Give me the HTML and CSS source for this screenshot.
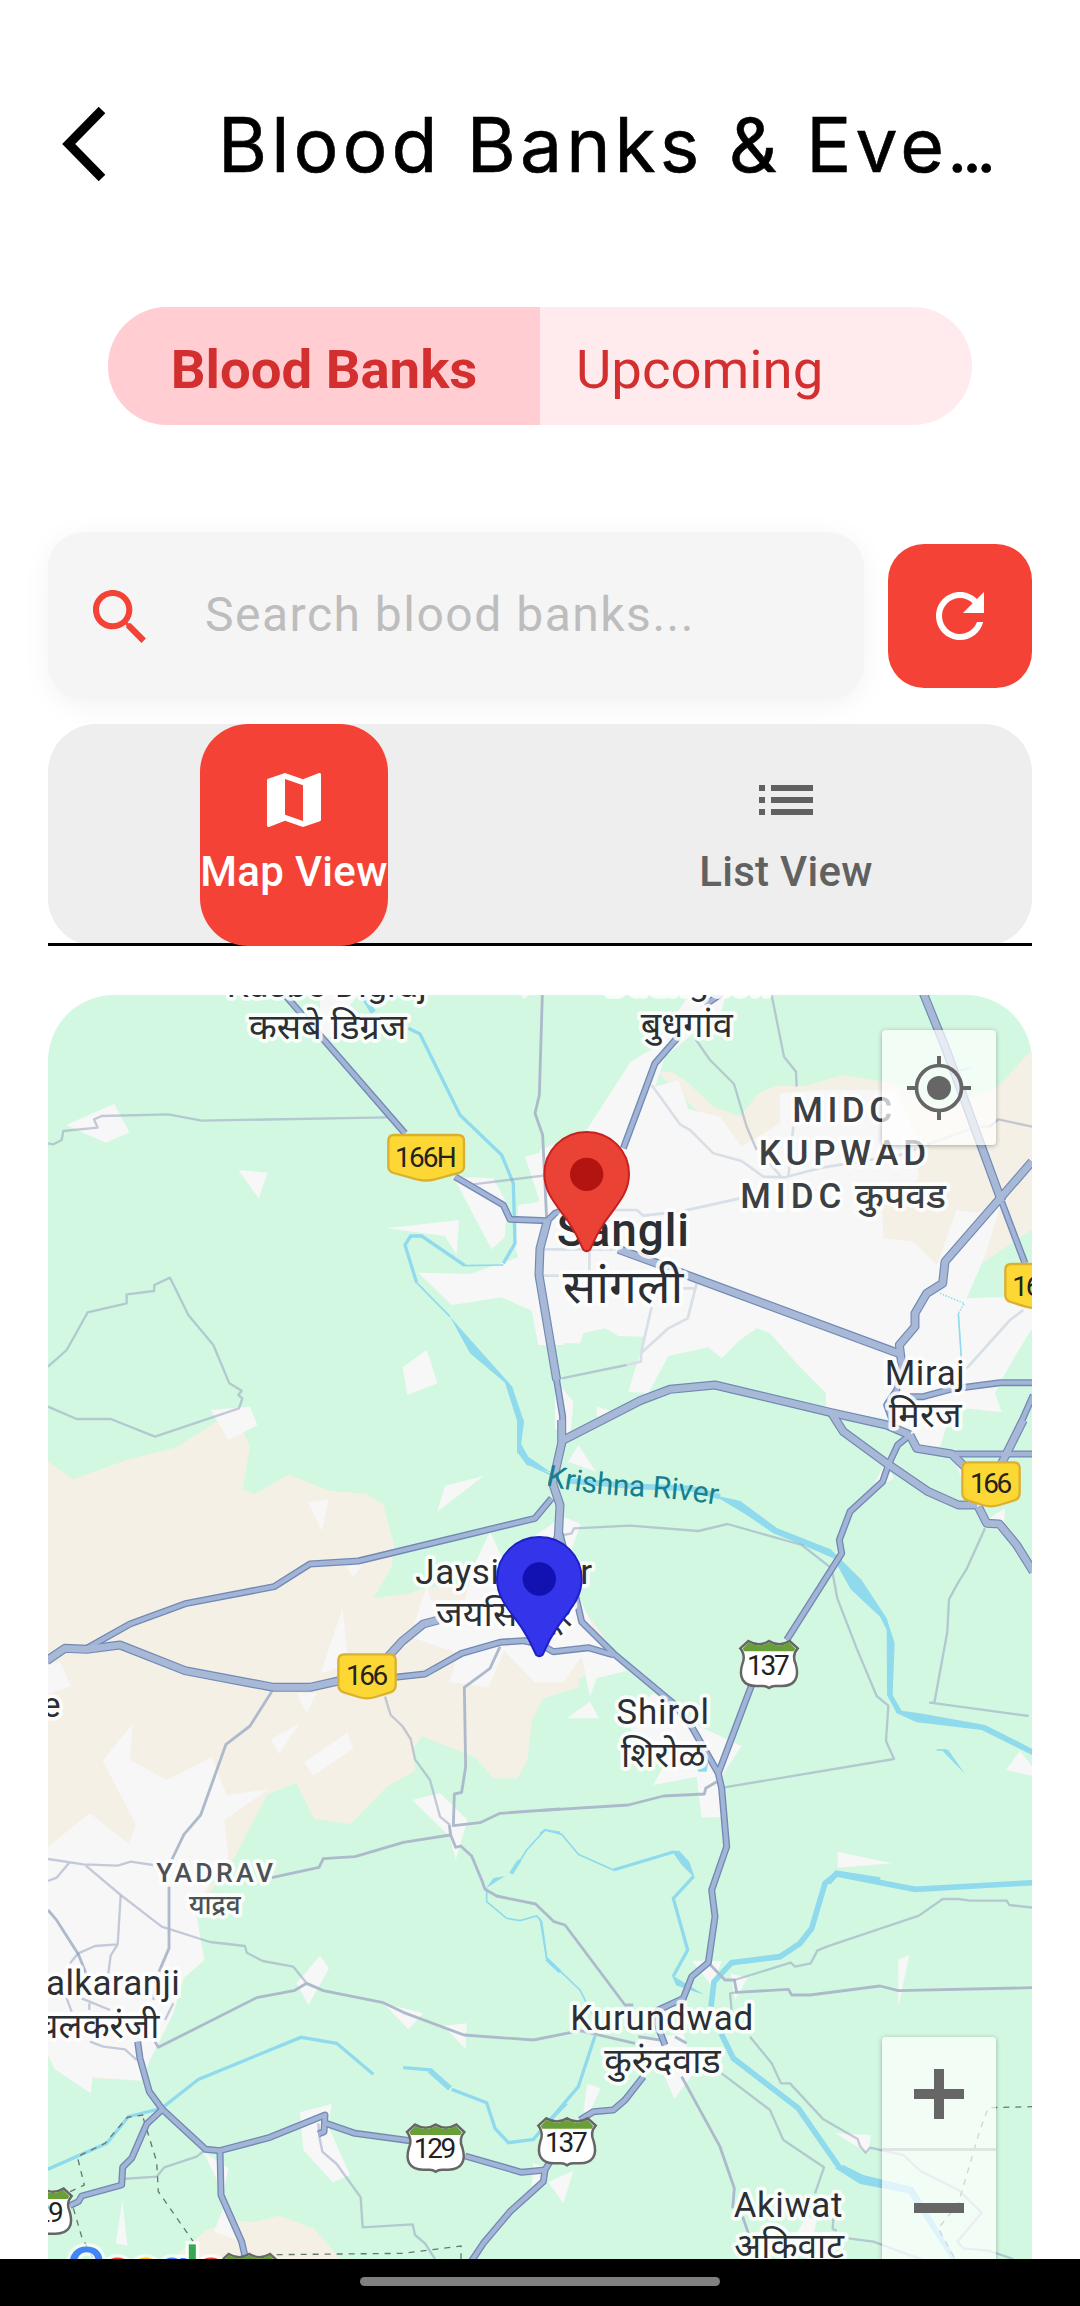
FILE: index.html
```html
<!DOCTYPE html>
<html lang="en">
<head>
<meta charset="utf-8">
<title>Blood Banks &amp; Events</title>
<link rel="stylesheet" href="styles.css">
</head>
<body>
<div class="screen">
  <header class="app-bar">
    <svg class="back" viewBox="0 0 48 76"><path d="M41 4 7.700 38 41 72" fill="none" stroke="#000" stroke-width="9.300"/></svg>
    <h1 class="title">Blood Banks &amp; Eve<span class="ellipsis">…</span></h1>
  </header>

  <nav class="tabs">
    <span class="tab tab-active">Blood Banks</span>
    <span class="tab">Upcoming</span>
  </nav>

  <div class="search-row">
    <div class="search">
      <svg class="search-icon" viewBox="3 3 17.500 17.500"><path fill="#f44336" d="M15.500 14h-.79l-.28-.27C15.410 12.590 16 11.110 16 9.500 16 5.910 13.090 3 9.500 3S3 5.910 3 9.500 5.910 16 9.500 16c1.610 0 3.090-.59 4.230-1.570l.27.28v.79l5 4.990L20.490 19l-4.990-5zm-6 0C7.010 14 5 11.990 5 9.500S7.010 5 9.500 5 14 7.010 14 9.500 11.990 14 9.500 14z"/></svg>
      <span class="placeholder">Search blood banks...</span>
    </div>
    <div class="refresh">
      <svg class="refresh-icon" viewBox="4 4 16 16"><path fill="#fff" d="M17.650 6.350C16.200 4.900 14.210 4 12 4c-4.420 0-7.990 3.580-7.990 8s3.570 8 7.990 8c3.730 0 6.840-2.550 7.730-6h-2.080c-.82 2.330-3.040 4-5.650 4-3.310 0-6-2.690-6-6s2.690-6 6-6c1.660 0 3.140.69 4.220 1.780L13 11h7V4l-2.350 2.350z"/></svg>
    </div>
  </div>

  <nav class="views">
    <div class="view-slot">
      <div class="view view-active">
        <svg class="view-icon" viewBox="0 0 24 24"><path fill="#fff" d="M20.500 3l-.16.03L15 5.100 9 3 3.360 4.900c-.21.07-.36.25-.36.48V20.500c0 .28.22.5.5.5l.16-.03L9 18.900l6 2.100 5.640-1.900c.21-.07.36-.25.36-.48V3.500c0-.28-.22-.5-.5-.5zM15 19l-6-2.110V5l6 2.110V19z"/></svg>
        <span>Map View</span>
      </div>
    </div>
    <div class="view-slot">
      <div class="view">
        <svg class="view-icon" viewBox="0 0 24 24"><path fill="#616161" d="M3 13h2v-2H3v2zm0 4h2v-2H3v2zm0-8h2V7H3v2zm4 4h14v-2H7v2zm0 4h14v-2H7v2zM7 7v2h14V7H7z"/></svg>
        <span>List View</span>
      </div>
    </div>
  </nav>

  <section class="map">
    <svg class="canvas" viewBox="144 2985 2952 3792">
      <defs>
        <g id="trunk">
          <g transform="translate(120 2940)">
            <path d="M1522 722 1500 805 1497 885 1550 1200"/>
          </g>
          <g transform="translate(1620 2940)">
            <path d="M60 1385 300 1262 390 1228 525 1215 870 1297 1040 1335 1110 1365"/>
            <path d="M875 1300 910 1355 1040 1450 1165 1535 1255 1575 1310 1575"/>
            <path d="M1476 545 1215 845 1208 910 1160 940 1125 1000 1125 1040 1078 1095 1085 1150"/>
            <path d="M1150 40 1215 200 1385 665"/>
            <path d="M235 808 350 850 440 885 1075 1120"/>
          </g>
          <g transform="translate(1620 4260)">
            <path d="M1110 45 1130 85 1235 102 1310 175"/>
            <path d="M1450 0 1400 100 1385 130"/>
            <path d="M1315 260 1340 310 1378 312 1430 375 1480 455"/>
            <path d="M65 0 65 70 38 190 60 255 55 350 35 400"/>
          </g>
          <g transform="translate(120 4260)">
            <path d="M20 722 75 685 140 688 240 675 435 752 700 802 810 802 895 783"/>
            <path d="M1040 715 1085 665 1150 612 1195 600"/>
          </g>
        </g>
        <g id="main">
          <g transform="translate(120 2940)">
            <path d="M735 45 1095 460"/>
            <path d="M1245 590 1390 675 1410 718 1522 722 1545 700 1565 692"/>
            <path d="M1500 805 1497 885 1550 1200 1568 1310 1565 1400"/>
          </g>
          <g transform="translate(1620 2940)">
            <path d="M545 40 495 75M415 170 345 250 250 505"/>
            <path d="M1385 665 1455 850"/>
            <path d="M1085 1150 1070 1230 1040 1275 1060 1330"/>
            <path d="M1110 1250 1150 1250 1230 1228 1380 1208 1480 1208"/>
            <path d="M1480 1245 1420 1380"/>
          </g>
          <g transform="translate(1620 4260)">
            <path d="M1235 102H1480"/>
            <path d="M1110 45 1073 75 1045 135 1028 185 930 275 898 360 905 400 740 660"/>
            <path d="M635 795 535 1060 545 1105 560 1280 515 1410 525 1490 505 1628 455 1670 430 1735 355 1770 350 1810 375 1875"/>
            <path d="M60 340 110 540 125 605 220 700 400 850 455 920 535 1060"/>
            <path d="M-50 662 0 672 40 695 145 683 220 705"/>
          </g>
          <g transform="translate(120 4260)">
            <path d="M1535 235 1485 295 955 423 810 432 702 500 440 550 270 612 140 685"/>
            <path d="M1065 772 1155 762 1265 700 1380 667 1450 662 1500 672"/>
          </g>
          <g transform="translate(120 5580)">
            <path d="M293 545 300 595 328 695 367 748 497 868 540 872 690 832 855 765 852 815 835 822"/>
            <path d="M858 790 945 820 1110 842M1275 888 1445 937 1515 930 1530 905"/>
            <path d="M1515 930 1510 965 1410 1055 1330 1150 1290 1210"/>
            <path d="M367 748 320 792 275 895 248 922 245 975 125 1008 115 1025 90 1037"/>
            <path d="M540 872 543 1005 605 1145 620 1210"/>
          </g>
          <g transform="translate(1620 5580)">
            <path d="M310 650 255 720 220 750 160 755 120 780"/>
          </g>
        </g>
        <g id="highway-shield">
          <path fill="#fff" stroke="#666" stroke-width="7.500" d="M-86 25-62 3Q-30 22 0 3 30 22 62 3L86 25Q68 45 80 72C92 112 78 138 38 138H18Q8 138 0 144-8 138-18 138H-38C-78 138-92 112-80 72-68 45-86 25-86 25Z"/>
          <path fill="#689f38" d="M-79 26-61 7Q-30 25 0 7 30 25 61 7L79 26 74 34H-74Z"/>
        </g>
        <path id="route-badge" fill="#fdd835" stroke="#dbb030" stroke-width="7" d="M-68 3H68Q86 3 86 21V95Q86 112 70 117L25 131Q0 139-25 131L-70 117Q-86 112-86 95V21Q-86 3-68 3Z"/>
        <g id="pin">
          <path stroke-width="6" d="M140 456C68 456 13 513 13 582 13 640 50 675 85 725 112 765 122 790 130 809Q140 818 150 809C158 790 168 765 195 725 230 675 267 640 267 582 267 513 212 456 140 456Z"/>
        </g>
        <path id="river-name" d="M1637 4455Q1750 4483 1930 4490 2060 4497 2180 4520"/>
      </defs>

      <rect x="144" y="2985" width="2952" height="3792" fill="#d3f8e2"/>

      <g class="farmland">
        <path transform="translate(120 2940)" d="M530 1325 610 1355 630 1400H420ZM1490 665 1520 640V740H1490Z"/>
        <path transform="translate(1620 2940)" d="M355 278 395 275 440 305 520 380 600 410 655 340 710 318 800 318 905 285 1060 310 1200 385 1370 325 1480 205V745L1325 850 1100 900 900 600 600 520Z"/>
        <path transform="translate(120 4260)" d="M24 125 100 178 260 120 410 82 525 8 610 40 630 80 607 208 645 222 745 165 870 212 980 222 1030 255 1062 375 1055 440 1000 535 1100 522 1170 500 1560 500 1620 800 1510 835 1475 900 1462 1020 1432 1075H1360L1305 1012 1145 948 1120 985 1125 1052 1040 1100 932 1212 823 1197 768 1088 680 1125 585 1310 480 1420H24Z"/>
        <path transform="translate(1620 4260)" d="M115 545 195 655 150 650ZM-20 787H70L125 710 135 765 10 835-20 850Z"/>
        <path transform="translate(120 5580)" d="M380 1210 500 1110 590 1080 640 1087 715 1067 820 1105 905 1200ZM415 390 435 350 300 662 158 655ZM24 540 50 640 24 590ZM480 70 530 70 470 150Z"/>
      </g>

      <g class="town">
        <path transform="translate(120 2940)" d="M1455 530 1510 515H1570V1095H1495L1475 992 1385 952 1235 975 1135 878 1290 882 1435 832 1425 800 1435 675 1500 665ZM78 435 223 372 268 457 198 488ZM595 570 683 578 656 655ZM1240 590 1360 595 1400 670 1395 770 1355 808ZM1040 745 1257 720 1250 825 1215 768ZM1088 1162 1160 1110 1192 1210 1102 1244ZM512 1290 630 1280 652 1335 565 1380ZM840 40H960L925 80 880 170H840ZM1440 40H1475L1450 58Z"/>
        <path transform="translate(1620 2940)" d="M0 510 140 450 272 245 340 205 450 40H560L545 90 375 230 345 320 415 300 445 388 540 410 605 500 720 430V340L850 330 1070 330 1130 480 1135 600 1025 640 1030 775 1120 785 1190 855 1250 690 1315 700 1390 650 1340 810 1325 850 1280 955 1480 948V1040L1430 1120 1390 1190 1365 1240 1385 1297 1230 1280 1215 1345 1190 1400H1130L1060 1320 858 1290V1240L770 1150 690 1060 650 1045 600 1080 545 1135 505 1102 385 1128 325 1240 265 1235 315 1070 235 1068 195 1045 130 1060 120 1090H0ZM45 1200 100 1265 90 1385 45 1345ZM170 1280 240 1300 170 1310Z"/>
        <path transform="translate(120 4260)" d="M24 735 60 725 93 797 24 822ZM805 248 867 237 845 332ZM918 440 970 430 940 472ZM908 565 922 700 890 745 842 760ZM1215 198 1330 168 1192 275ZM1300 440 1350 335 1390 420 1560 470V787H1485L1393 693 1345 802 1228 785 1255 700 1110 650 1160 500 1190 590 1270 560ZM770 820H830L800 880ZM692 958 777 912 718 1003ZM793 1027 922 938 940 985 820 1067ZM188 1022 277 912 270 1020 380 1080 515 1012 560 1125 685 1108 553 1200 565 1310 490 1420H24V1280L150 1180 267 1273 287 1212ZM1117 1140 1200 1120 1282 1200 1247 1320 1230 1250Z"/>
        <path transform="translate(1620 4260)" d="M85 125 115 75 168 155ZM-20 350 70 290 122 312 80 430 130 560 170 650 260 752 170 775 150 830 125 710 70 787H-20ZM80 895 150 845 177 895ZM250 900 340 820 480 920 605 978 550 1060 560 1190 485 1193 470 1070 340 1095 370 1040ZM990 215 1035 130 1062 175ZM1250 130 1300 190 1270 200ZM1395 265 1390 345 1340 300ZM1398 1050 1440 993 1480 1045V1068ZM893 1295 1055 1330 893 1343ZM1110 0H1225L1200 80 1130 60Z"/>
        <path transform="translate(120 5580)" d="M24 60H450L470 170 493 300 430 355 400 460 330 600 305 662 158 650 152 700 45 628 24 580ZM770 370 840 287 867 325 805 435ZM1030 430 1150 460 1105 508ZM1210 498 1280 490 1277 567ZM780 757 875 732 865 800 930 945 878 967 790 870ZM490 875 565 925 550 1000ZM550 1045 590 1140 522 1115ZM247 1020 262 1157 228 1150ZM1480 910 1530 930 1475 980ZM1525 967 1600 932 1570 1030Z"/>
        <path transform="translate(1620 5580)" d="M457 303H545L515 378ZM572 340 622 355 585 420ZM1075 300 1108 285 1075 440ZM142 672 182 685 150 755H130ZM290 540 430 520 460 640 403 717 370 640ZM885 820 993 825 985 880ZM800 1070 830 1080 820 1130 770 1120Z"/>
      </g>

      <g class="water">
        <g transform="translate(120 2940)">
          <path class="w3" d="M965 40 1000 97"/>
          <path class="w2" d="M1105 145 1140 162 1260 405 1385 525 1420 610 1425 790 1390 850"/>
          <path class="w1" d="M1390 855 1275 857"/>
          <path class="w2" d="M1275 857 1145 768 1112 768 1095 795 1130 908"/>
          <path class="w1" d="M1130 908 1230 1010"/>
          <path d="M1230 1010 1290 1120 1395 1208 1432 1325 1431 1420H1440L1452 1325 1417 1220 1310 1100Z" class="area"/>
        </g>
        <g transform="translate(120 4260)">
          <path class="area" d="M1431 0H1452L1442 70 1465 110 1535 158 1460 135 1431 95Z"/>
          <path class="w1" d="M1560 1237 1515 1230 1460 1290 1435 1330"/>
          <path class="w2" d="M1435 1325 1412 1360"/>
        </g>
        <g transform="translate(1620 4260)">
          <path class="w1" d="M-20 140 50 172"/>
          <path class="w3" d="M80 182 300 200 450 205 540 230"/>
          <path class="area" d="M520 225 600 242 712 325 872 388 965 480 1040 595 1064 670 1058 825 1085 872 1140 880 1335 915 1480 988V1007L1325 930 1130 907 1070 880 1041 825 1040 630 1020 590 932 508 880 415 795 378 700 340 620 285Z"/>
          <path class="w1" d="M1190 990H1220"/><path class="area" d="M1205 990H1225L1275 1062Z"/>
          <path class="w1" d="M0 1240 15 1230 65 1243 115 1303 220 1350"/>
          <path class="w2" d="M220 1350 400 1296"/>
          <path class="area" d="M395 1292H418L448 1325 465 1375 425 1335Z"/>
          <path class="w3" d="M865 1388 890 1360 1020 1380"/>
          <path class="area" d="M470 1045 505 1025 500 1055 475 1055Z"/>
        </g>
        <g transform="translate(120 5580)">
          <path class="w2" d="M1440 0 1415 40"/><path class="area" d="M1395 48 1360 55 1338 85Z"/>
          <path class="w1" d="M1340 85V125L1400 175 1440 182 1490 168 1505 185 1520 295"/>
          <path class="w2" d="M1520 298 1560 335"/>
          <path class="w2" d="M20 929 200 850 265 770 365 745 475 658 783 532 890 550 1000 643"/>
          <path class="w2" d="M1090 623 1175 630"/><path class="w3" d="M1170 632 1230 685"/>
          <path class="w2" d="M1235 688 1340 728 1365 805 1405 848 1480 838 1530 780 1580 730"/>
        </g>
        <g transform="translate(1620 5580)">
          <path class="w1" d="M0 175 20 295 120 390 165 480"/>
          <path class="w2" d="M20 297 60 335M165 528 115 680 30 780"/>
          <path class="w2" d="M460 50 400 115 443 270 400 348"/>
          <path class="area" d="M395 345 440 372 492 404 408 376Z"/>
          <path class="w3" d="M1480 68 1125 88 890 42 855 70 815 205 780 250 720 290 575 308 522 365 513 440"/>
          <path class="w3" d="M543 520 580 595 775 745 900 925"/>
          <path class="area" d="M885 925 910 915 970 945 1120 982 1250 1200H1235L1105 1000 960 972Z"/>
        </g>
        <g transform="translate(1620 2940)">
          <path class="w1" d="M1255 1000 1265 1150"/><path class="w1" stroke-dasharray="4 5" d="M1200 940 1273 970 1255 1000"/>
          <path class="area" d="M1245 270 1300 262 1270 272Z"/>
        </g>
      </g>

      <g class="lanes">
        <g transform="translate(120 2940)">
          <path class="mid" d="M24 490 40 493 65 480 70 453 173 443 162 418 185 408 385 403 485 422 1040 412"/>
          <path class="mid" d="M24 1160 80 1110 143 997 260 970V943L342 933 343 915 390 893 445 1005 520 1095 568 1210 605 1232 595 1245 607 1255 597 1285 345 1370 212 1317H110L24 1280"/>
          <path class="mid" d="M1300 613 1510 587"/>
        </g>
        <g transform="translate(1620 2940)">
          <path class="bold" d="M7 45-2 345-15 400 8 465 20 720"/>
          <path class="mid" d="M695 45 732 230 768 275 770 320M465 175 510 240 582 312 620 440 650 510"/>
          <path class="faint" d="M335 315 420 433 450 450 520 520 605 543 670 590 735 592 850 562 1080 525 1200 480 1310 440H1350M760 440 745 590M690 550 725 592"/>
          <path class="mid" d="M1350 440 1375 418 1476 440M65 1195 260 1155"/>
          <path class="faint" d="M260 1155 303 1145V1120L385 1045 443 1015 470 910M303 1120 335 980M220 690H290L310 707 420 695 600 655M0 808H230M148 815V880M0 887H70M430 925H465M1280 1165 1410 1020 1450 990"/>
        </g>
        <g transform="translate(120 4260)">
          <path class="bold" d="M695 815 630 918 558 973 482 1185 432 1243 395 1320"/>
          <path class="mid" d="M1035 830 1052 885 1087 918 1112 957 1125 1018 1170 1080 1200 1190 1230 1215"/>
          <path class="bold" d="M1380 680 1350 745 1273 802 1277 1040 1265 1117 1243 1122 1240 1217 1320 1208 1380 1180 1560 1167"/>
          <path class="bold" d="M1228 1215 1232 1245 1247 1282 1262 1278 1295 1308 1325 1380 1335 1408 1370 1428 1487 1452 1542 1505 1575 1515 1755 1755H1780"/>
          <path class="bold" d="M1230 1245 1090 1267 945 1310 850 1316 837 1342 695 1373"/>
          <path class="mid" d="M24 1317 130 1333 233 1337 272 1325 340 1335M90 1325 50 1373 24 1383M133 1333 242 1425 365 1520 510 1566 615 1578 620 1598 668 1623 760 1640 800 1690"/>
        </g>
        <g transform="translate(1620 4260)">
          <path class="mid" d="M70 345 95 340 102 325 270 317 475 333 562 312 785 375 875 445 892 535 950 685 1010 828 1045 857 1038 963 1062 1017 548 1103"/>
          <path class="mid" d="M1335 325 1280 447 1253 490 1227 538 1222 635 1183 848H1170L1430 883 1466 888"/>
          <path class="bold" d="M-5 1172 265 1155 370 1128 493 1122 497 1105 530 1085"/>
        </g>
        <g transform="translate(120 5580)">
          <path class="bold" d="M387 80V265L357 335M24 150 48 178 115 283 140 345"/>
          <path class="mid" d="M242 107 233 253 212 287 205 340M233 253 165 258 115 280 90 310M340 420 350 340M125 415 210 450M148 430V450M78 410 95 455M400 430 375 480M150 545 190 560 255 568 290 600"/>
          <path class="bold" d="M345 545 355 562 650 413 762 392 800 370 850 392 1030 428 1090 457 1272 525 1480 540 1620 512 1785 550"/>
          <path class="mid" d="M835 790 838 830 847 875 890 912 962 1012 968 1102 1118 1093 1125 1125 1155 1150 1185 1197M245 957 350 950 373 922 470 890 495 870"/>
        </g>
        <g transform="translate(1620 5580)">
          <path class="bold" d="M505 308 555 360H583L590 397 745 388 755 405H810L1020 378 1075 392 1480 383"/>
          <path class="mid" d="M583 360 752 308 765 320 812 310 832 272 860 260 1137 167 1208 117H1255L1290 122H1400L1408 135 1480 143M575 450 570 400 590 397M630 530 695 610 723 670H750L850 778 953 837 960 858 977 878 990 863 1090 885 1140 932 1255 990 1325 1058 1252 1145 1270 1165 1345 1172 1420 1197M545 640 690 750 730 840 852 922 825 1000M880 1075 878 1107 890 1112M925 1135 1000 1145 1150 1200"/>
          <path class="bold" d="M425 650 540 860 583 985 578 1045M608 1070 625 1120M295 530 360 540M405 530 440 550"/>
        </g>
      </g>

      <g class="boundary">
        <path transform="translate(120 5580)" d="M310 765 262 772 195 850 112 890 133 975 90 995M310 775 350 905 355 995 460 1145M100 1045 125 1130 160 1197M710 1184 1090 1180 1263 1158V1210"/>
        <path transform="translate(1620 5580)" d="M1480 740 1345 743 1320 810 1255 1030 1195 1105 1245 1197"/>
      </g>

      <use href="#main" class="main-edge"/>
      <use href="#trunk" class="trunk-edge"/>
      <use href="#main" class="main-fill"/>
      <use href="#trunk" class="trunk-fill"/>

      <g class="shields">
        <use href="#route-badge" x="1101" y="4960"/><text x="1038" y="5055" textLength="127">166</text>
        <use href="#route-badge" x="2973" y="4384"/><text x="2910" y="4480" textLength="127">166</text>
        <use href="#route-badge" x="3102" y="3789"/><text x="3037" y="3887" textLength="127">166</text>
        <path fill="#fdd835" stroke="#dbb030" stroke-width="7" d="M1182 3405H1374Q1392 3405 1392 3423V3500Q1392 3514 1376 3519L1305 3538Q1278 3545 1250 3538L1181 3519Q1165 3514 1165 3500V3423Q1165 3405 1182 3405Z"/>
        <text x="1185" y="3500" textLength="185">166H</text>
        <use href="#highway-shield" x="2307" y="4920"/><text x="2241" y="5025" textLength="128">137</text>
        <use href="#highway-shield" x="1307" y="6371"/><text x="1241" y="6475" textLength="128">129</text>
        <use href="#highway-shield" x="1701" y="6352"/><text x="1635" y="6457" textLength="128">137</text>
        <use href="#highway-shield" x="129" y="6563"/><text x="63" y="6665" textLength="128">129</text>
        <use href="#highway-shield" x="748" y="6759"/>
      </g>

      <g class="labels">
        <g transform="translate(120 2940)">
          <text x="560" y="50" textLength="600">Kasbe Digraj</text>
          <text x="627" y="178" textLength="473" lengthAdjust="spacingAndGlyphs">कसबे डिग्रज</text>
        </g>
        <g transform="translate(1620 2940)">
          <text x="195" y="45" textLength="495">Budhgaon</text>
          <text x="302" y="170" textLength="276" lengthAdjust="spacingAndGlyphs">बुधगांव</text>
          <g class="district">
            <text x="757" y="427" textLength="299">MIDC</text>
            <text x="656" y="555" textLength="502">KUPWAD</text>
            <text x="601" y="684" textLength="303">MIDC</text>
            <text x="945" y="683" textLength="273" lengthAdjust="spacingAndGlyphs">कुपवड</text>
          </g>
          <text class="city" x="50" y="798" textLength="397">Sangli</text>
          <text class="city city-local" x="68" y="968" textLength="362" lengthAdjust="spacingAndGlyphs">सांगली</text>
          <text x="1034" y="1215" textLength="240">Miraj</text>
          <text x="1047" y="1342" textLength="218" lengthAdjust="spacingAndGlyphs">मिरज</text>
        </g>
        <g transform="translate(120 4260)">
          <text x="1126" y="492" textLength="530">Jaysingpur</text>
          <text x="1188" y="618" textLength="410" lengthAdjust="spacingAndGlyphs">जयसिंगपूर</text>
          <text x="6" y="892">e</text>
        </g>
        <g transform="translate(1620 4260)">
          <text x="229" y="912" textLength="278">Shirol</text>
          <text x="243" y="1040" textLength="254" lengthAdjust="spacingAndGlyphs">शिरोळ</text>
        </g>
        <g transform="translate(120 5580)">
          <g class="suburb">
            <text x="349" y="66" textLength="350">YADRAV</text>
            <text x="447" y="162" textLength="155" lengthAdjust="spacingAndGlyphs">याद्रव</text>
          </g>
          <text x="18" y="405" textLength="401">alkaranji</text>
          <text x="-12" y="533" textLength="370" lengthAdjust="spacingAndGlyphs">चलकरंजी</text>
        </g>
        <g transform="translate(1620 5580)">
          <text x="91" y="511" textLength="549">Kurundwad</text>
          <text x="193" y="638" textLength="349" lengthAdjust="spacingAndGlyphs">कुरुंदवाड</text>
          <text x="581" y="1070" textLength="326">Akiwat</text>
          <text x="583" y="1195" textLength="329" lengthAdjust="spacingAndGlyphs">अकिवाट</text>
        </g>
        <text class="river"><textPath href="#river-name" textLength="518">Krishna River</textPath></text>
      </g>

      <text class="logo" x="198" y="6866" textLength="480"><tspan fill="#4285f4">G</tspan><tspan fill="#ea4335">o</tspan><tspan fill="#fbbc04">o</tspan><tspan fill="#4285f4">g</tspan><tspan fill="#34a853">l</tspan><tspan fill="#ea4335">e</tspan></text>

      <g transform="translate(1620 2940)"><use href="#pin" fill="#ea4335" stroke="#c5221f"/><circle cx="140" cy="583" r="50" fill="#b31412"/></g>
      <g transform="translate(1478 4155)"><use href="#pin" fill="#3435ea" stroke="#1f1fc5"/><circle cx="140" cy="582" r="50" fill="#1212b3"/></g>
    </svg>

    <div class="locate">
      <svg class="locate-icon" viewBox="0 0 64 64"><g fill="none" stroke="#666"><circle cx="32" cy="32" r="22.500" stroke-width="3.700"/><path stroke-width="4" d="M32 0v10M32 54v10M0 32h10M54 32h10"/></g><circle cx="32" cy="32" r="12" fill="#666"/></svg>
    </div>
    <div class="zoom">
      <div class="zoom-btn zoom-in"><svg viewBox="0 0 50 50"><path d="M0 25h50M25 0v50" stroke="#666" stroke-width="10"/></svg></div>
      <div class="zoom-btn"><svg viewBox="0 0 50 50"><path d="M0 25h50" stroke="#666" stroke-width="10"/></svg></div>
    </div>
  </section>

  <footer class="system-bar"><span class="handle"></span></footer>
</div>
</body>
</html>
```
FILE: styles.css
```css
* { box-sizing: border-box; }

body {
  margin: 0;
  background: #fff;
  font-family: Roboto, "Noto Sans", sans-serif;
}

.screen {
  display: flex;
  flex-direction: column;
  width: 1080px;
  height: 2306px;
  overflow: hidden;
}

.app-bar {
  display: flex;
  align-items: center;
  height: 307px;
  padding: 0 0 19px 61px;
}

.back { width: 48px; height: 76px; }

.title {
  margin: 7px 0 0 109px;
  font-family: Inter, Roboto, sans-serif;
  font-size: 75px;
  font-weight: 400;
  line-height: 90px;
  letter-spacing: 4.1px;
  white-space: nowrap;
  -webkit-text-stroke: .6px #000;
}

.ellipsis {
  font-family: Roboto, sans-serif;
  font-weight: 500;
  font-size: 66px;
  letter-spacing: 0;
}

.tabs {
  display: flex;
  width: 864px;
  height: 118px;
  margin: 0 auto;
  border-radius: 59px;
  overflow: hidden;
  background: #ffebee;
  color: #d32f2f;
  font-size: 54.5px;
}

.tab {
  flex: 1;
  padding: 31px 36px 0;
  line-height: 62px;
  white-space: nowrap;
}

.tab-active {
  background: #ffcdd2;
  font-weight: 700;
  text-align: center;
}

.search-row {
  display: flex;
  align-items: center;
  gap: 24px;
  margin: 107px 48px 0;
}

.search {
  display: flex;
  flex: 1;
  align-items: center;
  height: 168px;
  padding-left: 45px;
  border-radius: 36px;
  background: #f5f5f5;
  box-shadow: 0 6px 30px rgba(0, 0, 0, .05);
}

.search-icon { width: 53px; height: 53px; }

.placeholder {
  margin: -3px 0 0 59px;
  color: #bdbdbd;
  font-size: 48px;
  letter-spacing: 1.5px;
  white-space: nowrap;
}

.refresh {
  display: flex;
  align-items: center;
  justify-content: center;
  width: 144px;
  height: 144px;
  border-radius: 36px;
  background: #f44336;
}

.refresh-icon { width: 48px; height: 48px; }

.views {
  position: relative;
  z-index: 0;
  display: flex;
  height: 222px;
  margin: 24px 48px 0;
  background: linear-gradient(#000, #000) bottom / 100% 3px no-repeat;
}

.views::before {
  content: "";
  position: absolute;
  inset: 0;
  z-index: -1;
  border-radius: 48px;
  background: #eee;
  clip-path: inset(0 0 3px 0);
}

.view-slot {
  display: flex;
  flex: 1;
  justify-content: center;
}

.view {
  display: flex;
  flex-direction: column;
  align-items: center;
  height: 222px;
  padding-top: 40px;
  color: #616161;
  font-size: 42px;
  font-weight: 500;
  line-height: 50px;
  letter-spacing: .3px;
  white-space: nowrap;
}

.view-active {
  width: 188px;
  border-radius: 48px;
  background: #f44336;
  color: #fff;
}

.view-icon {
  width: 72px;
  height: 72px;
  margin-bottom: 11px;
}

.map {
  position: relative;
  height: 1264px;
  margin: 49px 48px 0;
  border-radius: 66px 66px 0 0;
  overflow: hidden;
}

.canvas {
  display: block;
  width: 984px;
  height: 1264px;
}

.farmland { fill: #f5f0e5; }
.town { fill: #f7f7f7; }

.water path { fill: none; stroke: #90daee; }
.water .w1 { stroke-width: 5; }
.water .w2 { stroke-width: 10; }
.water .w3 { stroke-width: 17; }
.water .area { fill: #90daee; stroke: none; }

.lanes { fill: none; stroke-linejoin: round; }
.lanes .faint { stroke: #d8dfe6; stroke-width: 8; }
.lanes .mid { stroke: rgba(140, 150, 185, .48); stroke-width: 7; }
.lanes .bold { stroke: #adbacb; stroke-width: 8.5; }

.boundary { fill: none; stroke: #69766f; stroke-width: 4; stroke-dasharray: 18 18; }

.main-edge, .main-fill, .trunk-edge, .trunk-fill {
  fill: none;
  stroke-linejoin: round;
}
.main-edge { stroke: #7289b5; stroke-width: 21; }
.main-fill { stroke: #a3b5d7; stroke-width: 13; }
.trunk-edge { stroke: #7289b5; stroke-width: 27; }
.trunk-fill { stroke: #a8b9d8; stroke-width: 20; }

.labels text {
  fill: #2b2e32;
  stroke: rgba(255, 255, 255, .85);
  stroke-width: 22;
  stroke-linejoin: round;
  paint-order: stroke;
  font-size: 105px;
}

.labels .city { font-size: 138px; font-weight: 500; }
.labels .city-local { font-weight: 400; }
.labels .district text { font-weight: 500; fill: #3c4043; }
.labels .suburb text { font-size: 80px; font-weight: 500; fill: #4d5156; }
.labels .river { fill: #14808f; stroke: none; font-size: 90px; }

.shields text { font-size: 84px; fill: #222; }

.logo {
  font-size: 178px;
  font-weight: 500;
  stroke: rgba(255, 255, 255, .7);
  stroke-width: 20;
  paint-order: stroke;
}

.locate, .zoom {
  position: absolute;
  right: 36px;
  width: 114px;
  border-radius: 4px;
  background: rgba(255, 255, 255, .7);
  box-shadow: 0 1px 5px rgba(0, 0, 0, .3);
}

.locate {
  display: flex;
  align-items: center;
  justify-content: center;
  top: 35px;
  height: 115px;
}

.locate-icon { width: 64px; height: 64px; }

.zoom { top: 1042px; height: 229px; }

.zoom-btn {
  display: flex;
  align-items: center;
  justify-content: center;
  height: 114px;
}

.zoom-in { box-shadow: inset 0 -3px #e0e5e2; }
.zoom-btn svg { width: 50px; height: 50px; }

.system-bar {
  display: flex;
  justify-content: center;
  height: 47px;
  padding-top: 18px;
  background: #000;
}

.handle {
  width: 360px;
  height: 9px;
  border-radius: 5px;
  background: #808080;
}
```
